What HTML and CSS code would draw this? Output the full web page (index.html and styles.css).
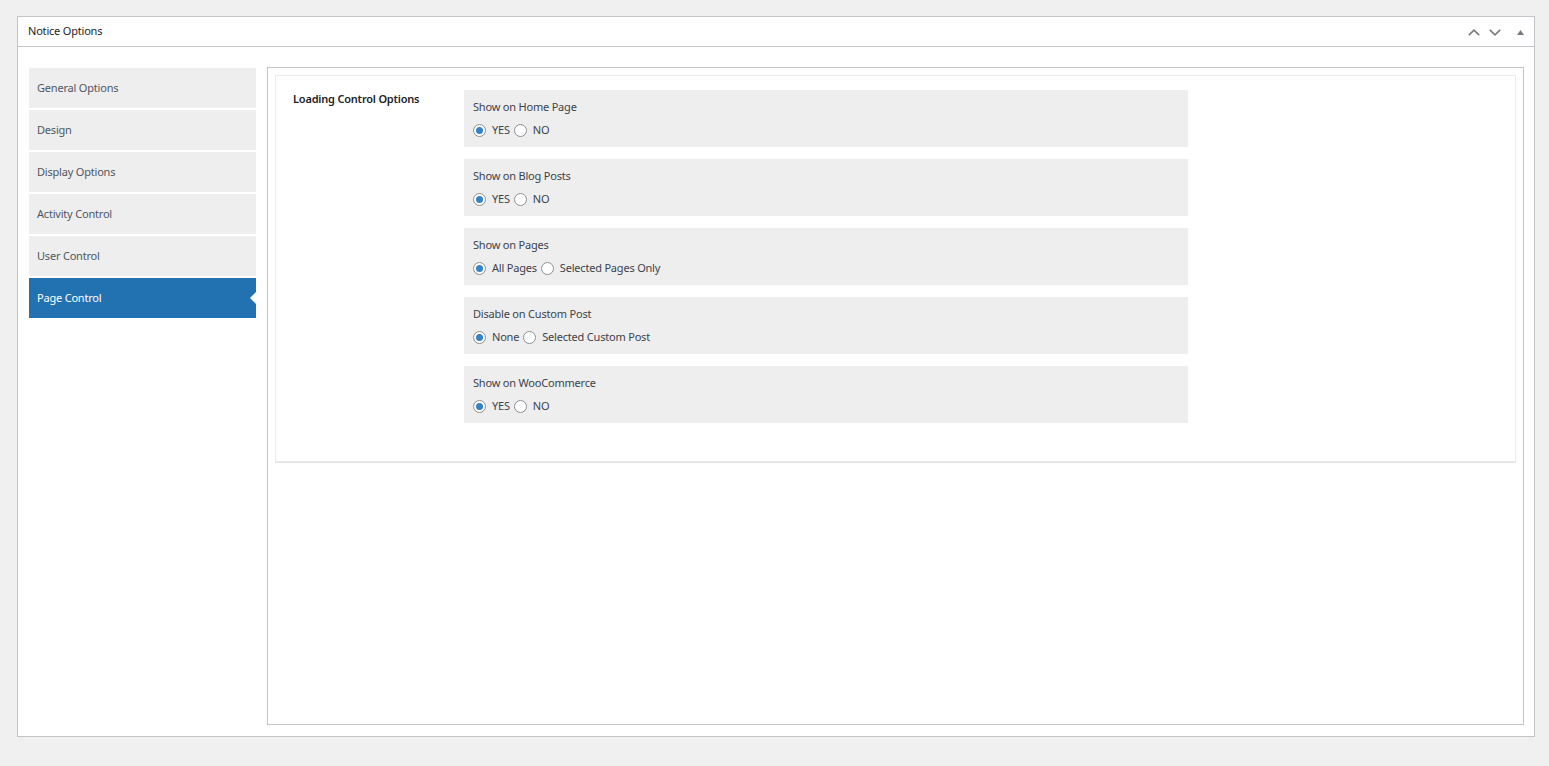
FILE: index.html
```html
<!DOCTYPE html>
<html>
<head>
  <title>Notice Options</title>
  <link rel="stylesheet" href="styles.css">
</head>
<body>
  <div class="postbox">
    <div class="postbox-header">
      <h2 class="hndle">Notice Options</h2>
      <div class="handle-actions">
        <span class="handle-btn">
          <svg width="12" height="7" viewBox="0 0 12 7"><polyline points="0.8,6.2 6,1.2 11.2,6.2" fill="none" stroke="#787c82" stroke-width="1.6"/></svg>
        </span>
        <span class="handle-btn">
          <svg width="12" height="7" viewBox="0 0 12 7"><polyline points="0.8,0.8 6,5.8 11.2,0.8" fill="none" stroke="#787c82" stroke-width="1.6"/></svg>
        </span>
        <span class="handle-btn toggle">
          <svg width="7" height="5" viewBox="0 0 7 5"><polygon points="3.5,0 7,5 0,5" fill="#787c82"/></svg>
        </span>
      </div>
    </div>
    <div class="inside">
      <ul class="tabs">
        <li class="tab">General Options</li>
        <li class="tab">Design</li>
        <li class="tab">Display Options</li>
        <li class="tab">Activity Control</li>
        <li class="tab">User Control</li>
        <li class="tab active">Page Control</li>
      </ul>
      <div class="panel">
        <div class="card">
          <div class="card-label">Loading Control Options</div>
          <div class="fields">
            <div class="field">
              <div class="field-title">Show on Home Page</div>
              <div class="choices">
                <label><input type="radio" name="home" checked> YES</label>
                <label><input type="radio" name="home"> NO</label>
              </div>
            </div>
            <div class="field">
              <div class="field-title">Show on Blog Posts</div>
              <div class="choices">
                <label><input type="radio" name="blog" checked> YES</label>
                <label><input type="radio" name="blog"> NO</label>
              </div>
            </div>
            <div class="field">
              <div class="field-title">Show on Pages</div>
              <div class="choices">
                <label><input type="radio" name="pages" checked> All Pages</label>
                <label><input type="radio" name="pages"> Selected Pages Only</label>
              </div>
            </div>
            <div class="field">
              <div class="field-title">Disable on Custom Post</div>
              <div class="choices">
                <label><input type="radio" name="custom" checked> None</label>
                <label><input type="radio" name="custom"> Selected Custom Post</label>
              </div>
            </div>
            <div class="field">
              <div class="field-title">Show on WooCommerce</div>
              <div class="choices">
                <label><input type="radio" name="woo" checked> YES</label>
                <label><input type="radio" name="woo"> NO</label>
              </div>
            </div>
          </div>
        </div>
      </div>
    </div>
  </div>
</body>
</html>
```

FILE: styles.css
```css
html, body {
  margin: 0;
  padding: 0;
}

body {
  background: #f0f0f0;
  padding: 16px 14px 0 17px;
  font-family: "Noto Sans", "Open Sans", sans-serif;
  font-size: 11px;
  letter-spacing: -0.2px;
  color: #3c434a;
}

.postbox {
  height: 721px;
  box-sizing: border-box;
  background: #fff;
  border: 1px solid #c3c4c7;
  box-shadow: 0 1px 1px rgba(0, 0, 0, 0.04);
  display: flex;
  flex-direction: column;
}

.postbox-header {
  height: 29px;
  border-bottom: 1px solid #c3c4c7;
  display: flex;
  align-items: center;
  justify-content: space-between;
}

.hndle {
  margin: 0;
  padding: 0 0 2px 10px;
  font-size: 11px;
  font-weight: 400;
  color: #1d2327;
}

.handle-actions {
  display: flex;
  align-items: center;
  padding-right: 10px;
  padding-top: 1px;
}

.handle-btn {
  display: flex;
  margin-left: 9px;
}

.handle-btn.toggle {
  margin-left: 16px;
}

.inside {
  flex: 1;
  display: flex;
  padding: 20px 10px 11px 11px;
}

.tabs {
  list-style: none;
  margin: 1px 11px 0 0;
  padding: 0;
  width: 227px;
  flex-shrink: 0;
}

.tab {
  height: 40px;
  box-sizing: border-box;
  margin-bottom: 2px;
  padding: 0 0 2px 8px;
  background: #eeeeee;
  color: #50575e;
  display: flex;
  align-items: center;
  position: relative;
}

.tab.active {
  background: #2271b1;
  color: #fff;
}

.tab.active::after {
  content: "";
  position: absolute;
  right: 0;
  top: 50%;
  margin-top: -6px;
  border-style: solid;
  border-width: 6px 6px 6px 0;
  border-color: transparent #fff transparent transparent;
}

.panel {
  flex: 1;
  border: 1px solid #c3c4c7;
  padding: 7px;
}

.card {
  border: 1px solid #ebebeb;
  box-shadow: 0 1px 0 #e4e4e4;
  padding: 14px 0 38px 17px;
  display: flex;
}

.card-label {
  width: 171px;
  flex-shrink: 0;
  font-weight: 600;
  color: #1d2327;
  line-height: 18px;
}

.fields {
  width: 724px;
}

.field {
  background: #eeeeee;
  height: 57px;
  box-sizing: border-box;
  margin-bottom: 12px;
  padding: 8px 9px 0;
}

.field:last-child {
  margin-bottom: 0;
}

.field-title {
  line-height: 18px;
}

.choices {
  margin-top: 5px;
  display: flex;
  align-items: center;
  line-height: 18px;
}

.choices label {
  display: flex;
  align-items: center;
  margin-right: 4px;
}

.choices input {
  -webkit-appearance: none;
  appearance: none;
  width: 13px;
  height: 13px;
  margin: 0 6px 0 0;
  border: 1px solid #8c8f94;
  border-radius: 50%;
  background: #fff;
  box-sizing: border-box;
  display: flex;
  align-items: center;
  justify-content: center;
}

.choices input:checked::before {
  content: "";
  width: 7px;
  height: 7px;
  border-radius: 50%;
  background: #3582c4;
}
```
